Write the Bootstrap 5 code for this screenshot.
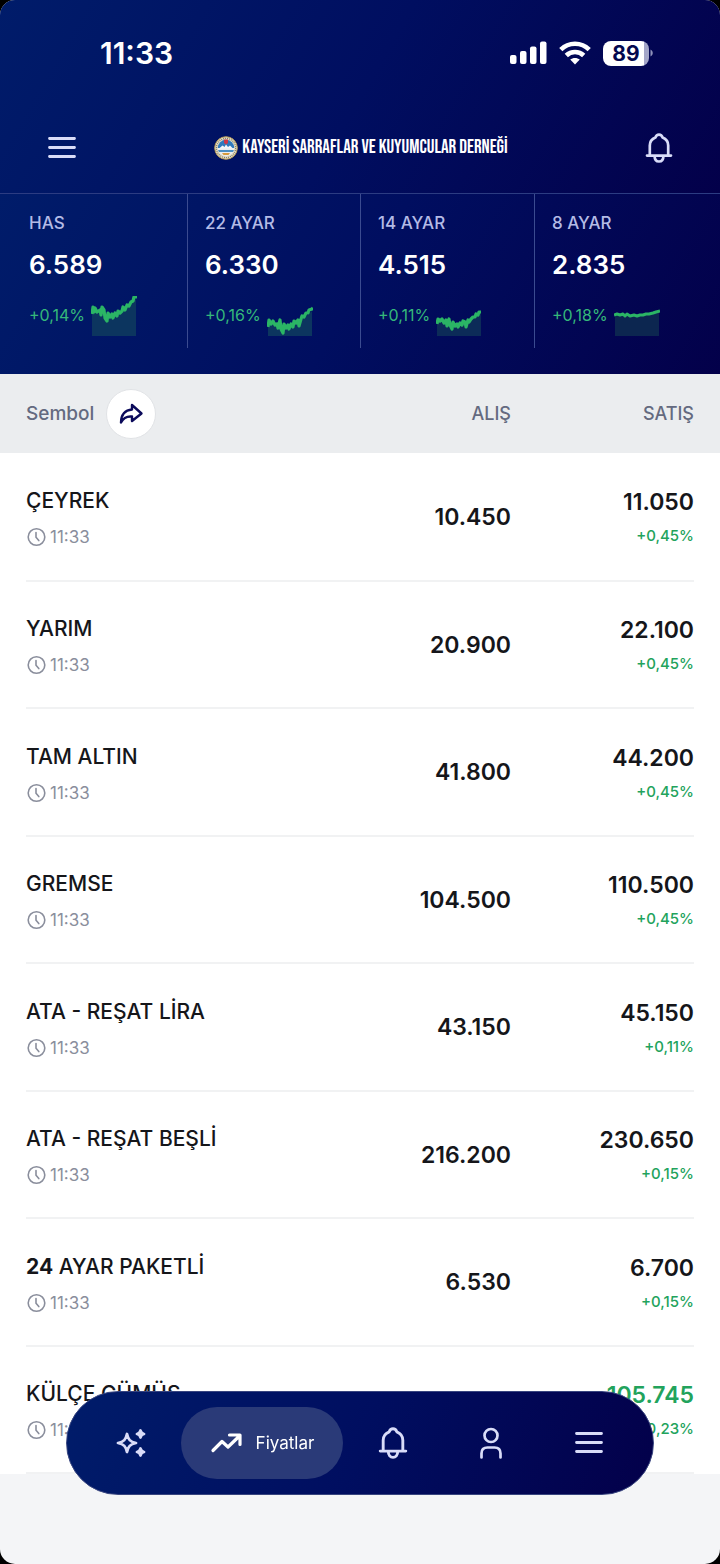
<!DOCTYPE html>
<html lang="tr">
<head>
    <meta charset="UTF-8">
    <meta name="viewport" content="width=device-width, initial-scale=1.0">
    <title>Kayseri Sarraflar ve Kuyumcular Derneği</title>
    <link href="https://cdn.jsdelivr.net/npm/bootstrap@5.3.0/dist/css/bootstrap.min.css" rel="stylesheet">
    <style>
        body {
            background: #000;
            font-family: "Inter", "Liberation Sans", sans-serif;
            color: #15161a;
        }

        .app {
            background: #f4f5f7;
            border-radius: 15px;
            overflow: hidden;
        }

        .icon-btn {
            background: none;
            color: #d9dcf8;
            line-height: 0;
        }

        /* header */
        .top-area {
            background: linear-gradient(120deg, #001c6a 0%, #000e60 50%, #03004a 100%);
            border-bottom: 1px solid #2c3c82;
            color: #fff;
        }

        .status-bar {
            height: 106px;
            padding: 0 66px 0 100px;
        }

        .clock {
            font-size: 30px;
            line-height: 34px;
            font-weight: 600;
        }

        .battery {
            width: 46px;
            height: 25px;
            border-radius: 8px;
            background: linear-gradient(90deg, #fff 89%, #a4a6c8 89%);
            color: #03084f;
            font-size: 21px;
            line-height: 25px;
            font-weight: 700;
        }

        .app-bar {
            height: 87px;
            padding: 0 47px 4px;
        }

        .brand-title {
            font-family: "Bebas Neue", "Liberation Sans Narrow", "DejaVu Sans Condensed", sans-serif;
            font-size: 19px;
            line-height: 24px;
            font-weight: 400;
        }

        /* ticker */
        .ticker {
            display: grid;
            grid-template-columns: 188fr 173fr 174fr 185fr;
            padding-bottom: 26px;
            background: linear-gradient(120deg, #001c6a 0%, #000e60 50%, #03004a 100%);
            color: #fff;
        }

        .ticker-item {
            padding: 16px 0 12px 17px;
            border-right: 1px solid #3b4b90;
        }

        .ticker-item:first-child {
            padding-left: 29px;
        }

        .ticker-item:last-child {
            border-right: 0;
        }

        .ticker-name {
            font-size: 17px;
            line-height: 26px;
            font-weight: 500;
            color: #b4bbe6;
        }

        .ticker-price {
            margin: 12px 0 14px;
            font-size: 26px;
            line-height: 34px;
            font-weight: 600;
        }

        .ticker-trend {
            gap: 6px;
        }

        .ticker-change {
            padding-bottom: 2px;
            font-size: 16px;
            line-height: 20px;
            color: #35b87a;
        }

        .spark {
            width: 46px;
            height: 40px;
        }

        /* price list */
        .list-area {
            background: #fff;
            padding: 0 26px;
        }

        .price-table {
            width: 100%;
            table-layout: fixed;
        }

        .price-table th {
            height: 79px;
            padding: 0;
            background: #ebedef;
            color: #646a80;
            font-size: 18px;
            line-height: 24px;
            font-weight: 500;
        }

        /* stretch the header colour to both window edges */
        .price-table th:first-child {
            box-shadow: -26px 0 #ebedef;
            font-size: 19px;
        }

        .price-table th:last-child {
            box-shadow: 26px 0 #ebedef;
        }

        .price-table td {
            height: 128px;
            padding: 0;
            border-bottom: 2px solid #f1f2f3;
            vertical-align: middle;
        }

        .price-table tr:nth-child(even) td {
            height: 127px;
        }

        .col-buy {
            width: 33%;
        }

        .price-table .col-sell {
            width: 183px;
        }

        .share-btn {
            width: 50px;
            height: 50px;
            border: 1px solid #e1e3e6;
            border-radius: 50%;
            background: #fff;
            color: #0b0a5a;
            line-height: 0;
        }

        .symbol {
            margin-bottom: 9px;
            font-size: 21px;
            line-height: 32px;
            font-weight: 500;
        }

        .stamp {
            font-size: 17px;
            line-height: 22px;
            color: #8a8e9c;
        }

        .price {
            font-size: 23px;
            line-height: 34px;
            font-weight: 600;
        }

        .sell-price {
            margin-bottom: 7px;
        }

        .change {
            padding-bottom: 2px;
            font-size: 15px;
            line-height: 20px;
            font-weight: 500;
        }

        .up {
            color: #22a35c;
        }

        /* bottom navigation */
        .dock {
            margin: 0 66px 69px;
            height: 104px;
            padding: 0 15px;
            border: 1px solid #38457f;
            border-radius: 52px;
            background: linear-gradient(110deg, #001c6a 0%, #000e60 50%, #03004a 100%);
        }

        .dock-link {
            flex: 1 1 0;
            color: #d9dcf8;
            line-height: 0;
            text-align: center;
        }

        .dock-active {
            flex: 0 0 162px;
            height: 72px;
            margin: 0 1px;
            border-radius: 36px;
            background: #2a3a78;
            color: #fff;
            font-size: 17px;
            line-height: 24px;
        }
    </style>
</head>
<body>
    <svg class="d-none">
        <symbol id="i-menu" viewBox="0 0 28 28">
            <path d="M1.500 4.500h25M1.500 13.500h25M1.500 22.500h25" fill="none" stroke="currentColor" stroke-width="2.800" stroke-linecap="round"/>
        </symbol>
        <symbol id="i-bell" viewBox="0 0 28 30">
            <path d="M2 22.600h24M4.800 22.400V12.500c0-3.800 2.400-6.600 5.600-7.900C11 2.700 12.200 1.600 14 1.600s3 1.100 3.600 3c3.200 1.300 5.600 4.100 5.600 7.900v9.900M9.600 23c0 3.500 1.900 5.500 4.400 5.500s4.400-2 4.400-5.500" fill="none" stroke="currentColor" stroke-width="2.700" stroke-linecap="round" stroke-linejoin="round"/>
        </symbol>
        <symbol id="i-clock" viewBox="0 0 20 20">
            <circle cx="10.500" cy="10" r="8.300" fill="none" stroke="currentColor" stroke-width="1.600"/>
            <path d="M10 5.500v4.700l2.800 3.400" fill="none" stroke="currentColor" stroke-width="1.600" stroke-linecap="round"/>
        </symbol>
    </svg>

    <div class="app min-vh-100">
        <header class="top-area">
            <div class="status-bar d-flex align-items-center justify-content-between">
                <div class="clock">11:33</div>
                <div class="d-flex align-items-center">
                    <svg width="37" height="24" viewBox="0 0 37 24" fill="#fff">
                        <rect x="0" y="14" width="6.500" height="9" rx="2"/>
                        <rect x="10" y="10" width="6.500" height="13" rx="2"/>
                        <rect x="20" y="5.500" width="6.500" height="17.500" rx="2"/>
                        <rect x="30" y="0.500" width="6.500" height="22.500" rx="2"/>
                    </svg>
                    <svg class="ms-2 me-2 px-1" width="40" height="24" viewBox="0 0 32 24" fill="none" stroke="#fff" stroke-width="4.600">
                        <path d="M1.800 8.600C9.600.8 22.400.8 30.200 8.600"/>
                        <path d="M7.300 14.500C12 9.800 20 9.800 24.700 14.500"/>
                        <path d="M16 23.500l-4.800-4.900c2.600-2.300 7-2.300 9.600 0z" fill="#fff" stroke="none"/>
                    </svg>
                    <div class="battery text-center">89</div>
                    <svg width="5" height="8" viewBox="0 0 5 8"><path d="M1.500 0.500c3 1.500 3 5.500 0 7z" fill="#8e91ba"/></svg>
                </div>
            </div>
            <div class="app-bar d-flex align-items-center justify-content-between">
                <button type="button" class="icon-btn border-0 p-0" aria-label="Menü">
                    <svg width="30" height="28"><use href="#i-menu"/></svg>
                </button>
                <div class="d-flex align-items-center gap-1">
                    <svg width="24" height="24" viewBox="0 0 24 24">
                        <circle cx="12" cy="12" r="11.300" fill="#e4dcc0" stroke="#b79b58" stroke-width="1"/>
                        <circle cx="12" cy="12" r="9.600" fill="none" stroke="#7d7c72" stroke-width="1.200" stroke-dasharray="1 1"/>
                        <circle cx="12" cy="12" r="8.300" fill="#e9edf0"/>
                        <path d="M3.700 12a8.300 8.300 0 0 1 16.600 0z" fill="#2f79bd"/>
                        <path d="M5 12.500l3.500-3 2 1.500L12 8.500l2 2.500 2-1.500 3 3z" fill="#f4f6f8"/>
                        <path d="M4 14h16l-1 2H5z" fill="#4b8fc4"/>
                        <path d="M8 17h8l-1.500 2h-5z" fill="#d79b3c"/>
                        <path d="M10 3.500h4V7l-2 1.500L10 7z" fill="#cf3848"/>
                    </svg>
                    <div class="brand-title text-nowrap">KAYSERİ SARRAFLAR VE KUYUMCULAR DERNEĞİ</div>
                </div>
                <button type="button" class="icon-btn border-0 p-0" aria-label="Bildirimler">
                    <svg width="28" height="30"><use href="#i-bell"/></svg>
                </button>
            </div>
        </header>

        <section class="ticker">
            <div class="ticker-item">
                <div class="ticker-name">HAS</div>
                <div class="ticker-price">6.589</div>
                <div class="ticker-trend d-flex align-items-center">
                    <span class="ticker-change">+0,14%</span>
                    <svg class="spark" viewBox="0 0 46 40">
                        <path d="M1 16L11 14 15 22 30 16 45 3V40H1z" fill="#0c355f"/>
                        <path d="M1 18l1-7 1 5 1-4 2 4 3-2 1 5 1-8 2 3 1 8 2 3 1-8 2 4 2-3 1 4 2-5 2 3 1-5 2 2 2-2 1-4 2 3 2-5 2 1 2-4 2-1 1-4 2 0 1-4" fill="none" stroke="#2bb565" stroke-width="3.200" stroke-linejoin="round"/>
                    </svg>
                </div>
            </div>
            <div class="ticker-item">
                <div class="ticker-name">22 AYAR</div>
                <div class="ticker-price">6.330</div>
                <div class="ticker-trend d-flex align-items-center">
                    <span class="ticker-change">+0,16%</span>
                    <svg class="spark" viewBox="0 0 46 40">
                        <path d="M1 28L11 26 15 34 30 28 45 15V40H1z" fill="#0c355f"/>
                        <path d="M1 31l1-7 2 4 2-3 2 4 2-1 1 4 2-8 1 9 2 4 1-9 2 4 2-3 1 4 2-5 2 3 1-6 2 2 2-3 1 6 2-7 1-3 2 1 2-4 2 0 1-3 3-1 1-1" fill="none" stroke="#2bb565" stroke-width="3.200" stroke-linejoin="round"/>
                    </svg>
                </div>
            </div>
            <div class="ticker-item">
                <div class="ticker-name">14 AYAR</div>
                <div class="ticker-price">4.515</div>
                <div class="ticker-trend d-flex align-items-center">
                    <span class="ticker-change">+0,11%</span>
                    <svg class="spark" viewBox="0 0 46 40">
                        <path d="M1 26L11 24 15 31 30 26 45 16V40H1z" fill="#0c2b58"/>
                        <path d="M1 28l1-5 2 2 2-2 2 4 2-3 1 6 2-7 1 6 2 4 1-7 2 4 2-2 1 3 2-4 2 2 1-4 2 1 1 5 2-7 1 2 2-3 2-2 2 0 1-3 2 1 1-3 2 0" fill="none" stroke="#2bb565" stroke-width="3.200" stroke-linejoin="round"/>
                    </svg>
                </div>
            </div>
            <div class="ticker-item">
                <div class="ticker-name">8 AYAR</div>
                <div class="ticker-price">2.835</div>
                <div class="ticker-trend d-flex align-items-center">
                    <span class="ticker-change">+0,18%</span>
                    <svg class="spark" viewBox="0 0 46 40">
                        <path d="M1 19L15 20 30 18 45 16V40H1z" fill="#0c2650"/>
                        <path d="M0 19l3-1 3 1 3-1 2 2 2-2 3 2 4-1 3 1 3-1 3 0 3-1 3 0 4-1 3-1 4-1" fill="none" stroke="#2bb565" stroke-width="3" stroke-linejoin="round"/>
                    </svg>
                </div>
            </div>
        </section>

        <main class="list-area">
            <table class="price-table">
                <thead>
                    <tr>
                        <th scope="col">
                            <div class="d-flex align-items-center gap-2">
                                <span class="me-1">Sembol</span>
                                <button type="button" class="share-btn p-0" aria-label="Paylaş">
                                    <svg width="26" height="24" viewBox="0 0 26 24" fill="none" stroke="currentColor" stroke-width="2.400" stroke-linejoin="round"><path d="M14 3l9.500 8.500L14 19v-4.500c-5-.5-8.500 1-11 6C3 13 7 8 14 7.500z"/></svg>
                                </button>
                            </div>
                        </th>
                        <th scope="col" class="col-buy text-end">ALIŞ</th>
                        <th scope="col" class="col-sell text-end">SATIŞ</th>
                    </tr>
                </thead>
                <tbody id="priceRows"></tbody>
            </table>
        </main>

        <nav class="dock fixed-bottom d-flex align-items-center">
            <a href="#" class="dock-link" aria-label="Keşfet">
                <svg width="32" height="32" viewBox="0 0 32 32" fill="none" stroke="currentColor" stroke-width="2.800" stroke-linejoin="round">
                    <path d="M12 7c1.200 5.500 3 7.800 9 9-6 1.200-7.800 3.500-9 9-1.200-5.500-3-7.800-9-9 6-1.200 7.800-3.500 9-9z"/>
                    <path d="M25.500 3.500c.5 2.200 1.200 3 3.500 3.500-2.300.5-3 1.300-3.500 3.500C25 8.300 24.300 7.500 22 7c2.300-.5 3-1.300 3.500-3.500zM25.500 21.500c.5 2.200 1.200 3 3.500 3.500-2.300.5-3 1.300-3.500 3.500-.5-2.200-1.200-3-3.500-3.500 2.300-.5 3-1.300 3.500-3.500z" fill="currentColor"/>
                </svg>
            </a>
            <a href="#" class="dock-active d-flex align-items-center justify-content-center gap-2 text-decoration-none">
                <svg width="34" height="24" viewBox="0 0 34 24" fill="none" stroke="currentColor" stroke-width="3.200" stroke-linecap="round" stroke-linejoin="round">
                    <path d="M3 19.500l9-9 6 5.500L30 4.500M19.500 4H30v9.500"/>
                </svg>
                <span class="ms-1">Fiyatlar</span>
            </a>
            <a href="#" class="dock-link" aria-label="Bildirimler">
                <svg width="30" height="32"><use href="#i-bell"/></svg>
            </a>
            <a href="#" class="dock-link" aria-label="Profil">
                <svg width="26" height="32" viewBox="0 0 26 32" fill="none" stroke="currentColor" stroke-width="2.700" stroke-linecap="round">
                    <circle cx="13" cy="8.500" r="6.500"/>
                    <path d="M3.500 30.500v-4c0-3.800 2-6 6-6h7c4 0 6 2.200 6 6v4"/>
                </svg>
            </a>
            <a href="#" class="dock-link" aria-label="Menü">
                <svg width="30" height="28"><use href="#i-menu"/></svg>
            </a>
        </nav>
    </div>

    <script src="https://cdn.jsdelivr.net/npm/bootstrap@5.3.0/dist/js/bootstrap.bundle.min.js"></script>
    <script>
        const prices = [
            { name: 'ÇEYREK', buy: '10.450', sell: '11.050', change: '+0,45%' },
            { name: 'YARIM', buy: '20.900', sell: '22.100', change: '+0,45%' },
            { name: 'TAM ALTIN', buy: '41.800', sell: '44.200', change: '+0,45%' },
            { name: 'GREMSE', buy: '104.500', sell: '110.500', change: '+0,45%' },
            { name: 'ATA - REŞAT LİRA', buy: '43.150', sell: '45.150', change: '+0,11%' },
            { name: 'ATA - REŞAT BEŞLİ', buy: '216.200', sell: '230.650', change: '+0,15%' },
            { name: '<b>24</b> AYAR PAKETLİ', buy: '6.530', sell: '6.700', change: '+0,15%' },
            { name: 'KÜLÇE GÜMÜŞ', buy: '', sell: '105.745', change: '+0,23%', rising: true }
        ];

        document.getElementById('priceRows').innerHTML = prices.map(item => `
            <tr>
                <td>
                    <div class="symbol text-nowrap">${item.name}</div>
                    <div class="stamp d-flex align-items-center gap-1">
                        <svg width="20" height="20"><use href="#i-clock"/></svg>
                        <span>11:33</span>
                    </div>
                </td>
                <td class="price text-end">${item.buy}</td>
                <td class="text-end">
                    <div class="price sell-price ${item.rising ? 'up' : ''}">${item.sell}</div>
                    <div class="change up">${item.change}</div>
                </td>
            </tr>
        `).join('');
    </script>
</body>
</html>
